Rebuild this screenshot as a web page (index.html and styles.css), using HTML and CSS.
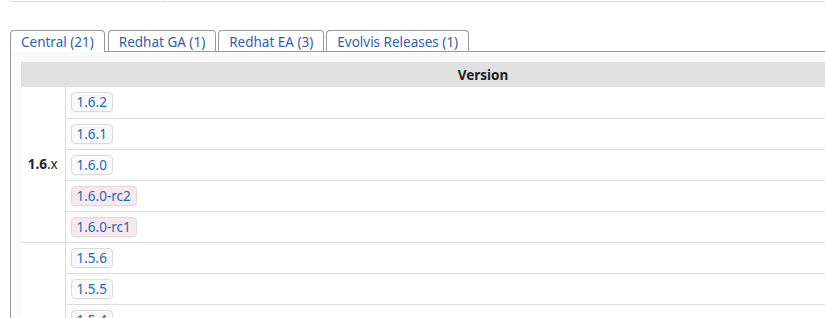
FILE: index.html
```html
<!DOCTYPE html>
<html lang="en">
<head>
    <meta charset="UTF-8">
    <meta name="viewport" content="width=device-width, initial-scale=1.0">
    <title>Versions</title>
    <link rel="stylesheet" href="styles.css">
</head>
<body>
    <div class="page">
        <div class="info-strip">
            <div class="info-cell info-label"></div>
            <div class="info-cell"></div>
        </div>

        <div class="tabs">
            <ul class="tab-list">
                <li class="tab active"><a href="#central">Central (21)</a></li>
                <li class="tab"><a href="#redhat-ga">Redhat GA (1)</a></li>
                <li class="tab"><a href="#redhat-ea">Redhat EA (3)</a></li>
                <li class="tab"><a href="#evolvis">Evolvis Releases (1)</a></li>
            </ul>

            <div class="tab-panel" id="central">
                <table class="versions">
                    <thead>
                        <tr>
                            <th colspan="2" class="version-head">Version</th>
                        </tr>
                    </thead>
                    <tbody>
                        <tr>
                            <td rowspan="5" class="group"><b>1.6</b>.x</td>
                            <td class="version"><a class="vbtn release" href="#">1.6.2</a></td>
                        </tr>
                        <tr><td class="version"><a class="vbtn release" href="#">1.6.1</a></td></tr>
                        <tr><td class="version"><a class="vbtn release" href="#">1.6.0</a></td></tr>
                        <tr><td class="version"><a class="vbtn candidate" href="#">1.6.0-rc2</a></td></tr>
                        <tr><td class="version"><a class="vbtn candidate" href="#">1.6.0-rc1</a></td></tr>
                    </tbody>
                    <tbody>
                        <tr>
                            <td rowspan="7" class="group"><b>1.5</b>.x</td>
                            <td class="version"><a class="vbtn release" href="#">1.5.6</a></td>
                        </tr>
                        <tr><td class="version"><a class="vbtn release" href="#">1.5.5</a></td></tr>
                        <tr><td class="version"><a class="vbtn release" href="#">1.5.4</a></td></tr>
                        <tr><td class="version"><a class="vbtn release" href="#">1.5.3</a></td></tr>
                        <tr><td class="version"><a class="vbtn release" href="#">1.5.2</a></td></tr>
                        <tr><td class="version"><a class="vbtn release" href="#">1.5.1</a></td></tr>
                        <tr><td class="version"><a class="vbtn release" href="#">1.5.0</a></td></tr>
                    </tbody>
                </table>
            </div>
        </div>
    </div>
</body>
</html>
```

FILE: styles.css
```css
* {
    margin: 0;
    padding: 0;
    box-sizing: border-box;
}

html, body {
    overflow: hidden;
}

body {
    background-color: #fff;
    color: #222;
    font-family: "Noto Sans", Arial, sans-serif;
    font-size: 13.5px;
}

.page {
    width: 1100px;
    padding-left: 10px;
}

.info-strip {
    display: flex;
    height: 2px;
    border-bottom: 1px solid #ddd;
}

.info-cell {
    border-left: 1px solid #ddd;
    flex-grow: 1;
}

.info-label {
    flex: 0 0 153px;
}

.tabs {
    margin-top: 28px;
}

.tab-list {
    list-style: none;
    display: flex;
    gap: 2px;
    position: relative;
    z-index: 1;
}

.tab {
    border: 1px solid #999;
    border-bottom: none;
    border-radius: 4px 4px 0 0;
    background-color: #fff;
    height: 21px;
}

.tab.active {
    height: 22px;
    margin-right: 1px;
}

.tab a {
    display: block;
    padding: 2px 10px 0;
    line-height: 18px;
    color: #3060b0;
    text-decoration: none;
}

.tab-panel {
    border-left: 1px solid #999;
    border-top: 1px solid #999;
    background-color: #fafafa;
    padding: 10px;
    margin-top: -1px;
}

.versions {
    border-collapse: collapse;
    background-color: #fff;
}

.version-head {
    width: 924px;
    height: 25px;
    background-color: #e0e0e0;
    font-weight: bold;
    text-align: center;
    color: #222;
}

.versions td {
    height: 31px;
    border-bottom: 1px solid #ddd;
}

.group {
    width: 44px;
    text-align: center;
    vertical-align: middle;
    border-right: 1px solid #ddd;
    color: #222;
}

.version {
    padding-left: 5px;
}

.vbtn {
    display: inline-block;
    height: 20px;
    line-height: 18px;
    padding: 0 5px;
    border: 1px solid #dadada;
    border-radius: 4px;
    color: #2466c0;
    text-decoration: none;
    box-shadow: 0 1px 1px rgba(0, 0, 0, 0.04);
}

.release {
    background-color: #f8f9fc;
}

.candidate {
    background-color: #f8e8ec;
}
```
